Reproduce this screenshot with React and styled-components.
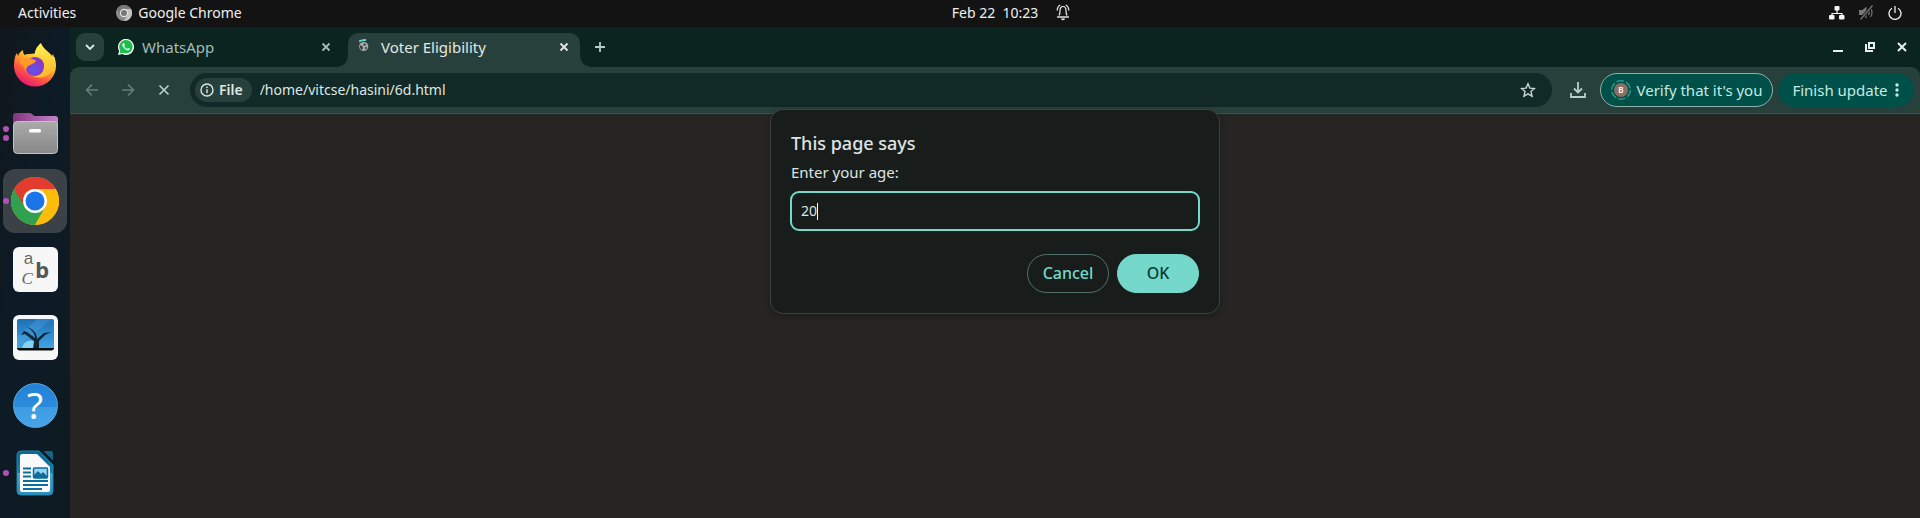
import React from "react";
import styled, { createGlobalStyle, css } from "styled-components";

const GlobalStyle = createGlobalStyle`
  *, *::before, *::after { box-sizing: border-box; }
  html, body { margin: 0; background: #272524; }
  body, button, input { font-family: "Noto Sans", "Open Sans", sans-serif; }
  button { border: 0; padding: 0; background: none; color: inherit; cursor: pointer; }
  svg { display: block; flex: none; }
`;

const Desktop = styled.div`
  display: flex;
  flex-direction: column;
  min-height: 100vh;
  overflow: hidden;
`;

const SystemBar = styled.header`
  display: grid;
  grid-template-columns: 1fr auto 1fr;
  align-items: center;
  height: 27px;
  padding: 0 18px 2px;
  background: #131313;
  color: #f0f0f0;
`;

const SystemGroup = styled.div`
  display: flex;
  align-items: center;
  gap: ${(p) => p.$gap}px;
  justify-content: ${(p) => (p.$end ? "flex-end" : "flex-start")};
`;

const ClockGroup = styled(SystemGroup)`
  padding-left: 102px;
`;

const SystemButton = styled.button`
  display: flex;
  align-items: center;
  gap: 6px;
  font-size: 14px;
  line-height: 20px;
  white-space: pre;
`;

const Workspace = styled.div`
  display: flex;
  flex: 1;
`;

const Dock = styled.nav`
  display: flex;
  flex-direction: column;
  align-items: center;
  gap: 4px;
  flex: none;
  width: 70px;
  padding: 6px 3px;
  background: linear-gradient(100deg, #10171c, #0d1b26 45%, #0d1a20);
`;

const DockItem = styled.button`
  position: relative;
  display: flex;
  align-items: center;
  justify-content: center;
  width: 64px;
  height: 64px;
  border-radius: 12px;
  background: ${(p) => (p.$active ? "#3a4147" : "transparent")};
`;

const RunningDots = styled.span`
  position: absolute;
  left: 0;
  top: 0;
  bottom: 0;
  display: flex;
  flex-direction: column;
  justify-content: center;
  gap: 3px;
`;

const Dot = styled.span`
  width: 6px;
  height: 6px;
  border-radius: 50%;
  background: #b350b5;
`;

const Browser = styled.main`
  display: flex;
  flex-direction: column;
  flex: 1;
  min-width: 0;
  background: #0b2420;
  position: relative;
`;

const TabStrip = styled.div`
  display: flex;
  align-items: flex-start;
  height: 40px;
  padding: 6px 0 0 6px;
`;

const TabSearch = styled.button`
  display: flex;
  align-items: center;
  justify-content: center;
  width: 28px;
  height: 28px;
  border-radius: 9px;
  background: #28403b;
  color: #dbe9e5;
`;

const foot = css`
  content: "";
  position: absolute;
  bottom: 0;
  width: 10px;
  height: 10px;
`;

const Tab = styled.div`
  position: relative;
  display: flex;
  align-items: center;
  width: ${(p) => (p.$active ? 232 : 244)}px;
  height: 34px;
  padding: ${(p) => (p.$active ? "0 6px 6px 9px" : "0 12px 6px 14px")};
  border-radius: 10px 10px 0 0;
  color: ${(p) => (p.$active ? "#e0e8e5" : "#a3bdb7")};
  ${(p) =>
    p.$active &&
    css`
      background: #28403b;
      &::before {
        ${foot}
        left: -10px;
        background: radial-gradient(circle at 0 0, transparent 9px, #28403b 10px);
      }
      &::after {
        ${foot}
        right: -10px;
        background: radial-gradient(circle at 100% 0, transparent 9px, #28403b 10px);
      }
    `}
`;

const TabTitle = styled.span`
  flex: 1;
  padding-left: 8px;
  font-size: 15px;
  line-height: 20px;
`;

const IconButton = styled.button`
  display: flex;
  align-items: center;
  justify-content: center;
  width: ${(p) => p.$size || 20}px;
  height: ${(p) => p.$size || 20}px;
  color: ${(p) => p.$color || "inherit"};
`;

const NewTab = styled(IconButton)`
  margin-left: 6px;
  color: #b4ccc6;
`;

const DownloadButton = styled(IconButton)`
  margin-left: 12px;
  color: #b9d0ca;
`;

const WindowControls = styled.div`
  display: flex;
  gap: 4px;
  margin-left: auto;
  padding-right: 4px;
  color: #e6f0ed;
`;

const Toolbar = styled.div`
  display: flex;
  align-items: center;
  height: 47px;
  padding: 0 6px 1px 8px;
  border-radius: 9px 9px 0 0;
  border-bottom: 1px solid #474e4b;
  background: #28403b;
`;

const NavButtons = styled.div`
  display: flex;
  gap: 8px;
  margin-right: 12px;
`;

const Omnibox = styled.div`
  display: flex;
  align-items: center;
  flex: 1;
  height: 34px;
  padding: 0 10px 0 5px;
  border-radius: 17px;
  background: #112a27;
  color: #dfe7e4;
`;

const FileChip = styled.button`
  display: flex;
  align-items: center;
  gap: 5px;
  height: 24px;
  padding: 0 9px 0 5px;
  border-radius: 12px;
  background: #28403b;
  font-size: 14px;
  font-weight: 600;
`;

const Address = styled.input`
  flex: 1;
  min-width: 0;
  padding: 0 8px;
  border: 0;
  outline: 0;
  background: none;
  color: inherit;
  font-size: 14px;
  line-height: 20px;
`;

const Pill = styled.button`
  display: flex;
  align-items: center;
  justify-content: center;
  gap: 6px;
  width: ${(p) => p.$width}px;
  height: 34px;
  margin-left: ${(p) => p.$gap}px;
  border: 1px solid ${(p) => (p.$outlined ? "#8fb3ab" : "#00504a")};
  border-radius: 17px;
  background: #00504a;
  color: #c5eae1;
  font-size: 15px;
  white-space: nowrap;
`;

const Page = styled.section`
  flex: 1;
  background: #272524;
`;

const Dialog = styled.form`
  position: absolute;
  top: 82px;
  left: 50%;
  transform: translateX(-50%);
  width: 450px;
  padding: 20px;
  border: 1px solid #3a4341;
  border-radius: 13px;
  background: #181d1c;
  box-shadow: 0 2px 6px rgba(0, 0, 0, 0.3);
  color: #dfe4e2;
`;

const DialogTitle = styled.h1`
  margin: 0;
  font-size: 18px;
  font-weight: 500;
  line-height: 26px;
`;

const DialogLabel = styled.label`
  display: block;
  margin: 5px 0 6px;
  font-size: 15px;
  line-height: 22px;
  padding-bottom: 2px;
`;

const Field = styled.label`
  display: flex;
  align-items: center;
  height: 40px;
  margin: 0 -1px;
  padding: 0 9px;
  border: 2px solid #74d9ca;
  border-radius: 9px;
  cursor: text;
`;

const FieldInput = styled.input`
  field-sizing: content;
  padding: 0;
  border: 0;
  outline: 0;
  background: none;
  color: inherit;
  caret-color: transparent;
  font-size: 14px;
  line-height: 20px;
`;

const Caret = styled.span`
  width: 1px;
  height: 17px;
  background: #fff;
`;

const Actions = styled.div`
  display: flex;
  justify-content: flex-end;
  gap: 8px;
  padding: 23px 0 0;
`;

const ActionButton = styled.button`
  width: 82px;
  height: 39px;
  padding-bottom: 2px;
  border: 1px solid ${(p) => (p.$primary ? "#74d9ca" : "#54716b")};
  border-radius: 20px;
  background: ${(p) => (p.$primary ? "#74d9ca" : "transparent")};
  color: ${(p) => (p.$primary ? "#0b3a36" : "#74d9ca")};
  font-size: 16px;
  font-weight: 500;
`;

function Stroke({ size = 16, width = 2, children }) {
  return (
    <svg width={size} height={size} viewBox={`0 0 ${size} ${size}`} fill="none" stroke="currentColor" strokeWidth={width} aria-hidden="true">
      {children}
    </svg>
  );
}

const CloseIcon = () => <Stroke size={10} width={1.8}><path d="M1.500 1.500l7 7M8.500 1.500l-7 7" /></Stroke>;

const ChromeGreyIcon = () => (
  <svg width="16" height="16" viewBox="0 0 16 16" aria-hidden="true">
    <circle cx="8" cy="8" r="8" fill="#8b8b8b" />
    <path d="M8 4h7a8 8 0 0 1-7 12l3.500-6z" fill="#c4c4c4" />
    <path d="M1 4a8 8 0 0 1 14 0H8L4.500 10z" fill="#777" />
    <circle cx="8" cy="8" r="4.200" fill="#e4e4e4" />
    <circle cx="8" cy="8" r="3" fill="#777" />
  </svg>
);

const BellIcon = () => (
  <svg width="14" height="17" viewBox="0 0 14 17" fill="none" stroke="#eee" strokeWidth="1.200" aria-hidden="true">
    <path d="M3 11.500C4 10 4 8.500 4 6.500 4 4 5.200 2.500 7 2.500S10 4 10 6.500c0 2 0 3.500 1 5" />
    <path d="M1 13h12" strokeWidth="1.400" />
    <path d="M1.200 6.500C1.200 4 2.400 2 4.300 1M12.800 6.500C12.800 4 11.600 2 9.700 1" />
    <path d="M5 14.500h4a2 1.800 0 0 1-4 0z" fill="#eee" stroke="none" />
  </svg>
);

const NetworkIcon = () => (
  <svg width="16" height="14" viewBox="0 0 16 14" aria-hidden="true">
    <path d="M8 4v3M3 10V7.500h10V10" fill="none" stroke="#f5f5f5" strokeWidth="1.200" />
    <rect x="5.500" width="5" height="4.500" rx="1" fill="#f5f5f5" />
    <rect x="0" y="9" width="5.500" height="4.500" rx="1" fill="#f5f5f5" />
    <rect x="10" y="9" width="5.500" height="4.500" rx="1" fill="#f5f5f5" />
  </svg>
);

const MutedIcon = () => (
  <svg width="15" height="15" viewBox="0 0 15 15" fill="none" stroke="#777" strokeWidth="1.200" aria-hidden="true">
    <path d="M0 5h3.500L7.500 1.500v12L3.500 10H0z" fill="#777" stroke="none" />
    <path d="M9.500 5c1 1.500 1 3.500 0 5M11.500 3c2 2.500 2 6.500 0 9" />
    <path d="M13.500.5l-12 14" stroke="#131313" strokeWidth="3" />
    <path d="M13.500.5l-12 14" />
  </svg>
);

const PowerIcon = () => <Stroke size={14} width={1.3}><path d="M4 2.200a6 6 0 1 0 6 0M7 0v7" /></Stroke>;

const FirefoxIcon = () => (
  <svg width="44" height="44" viewBox="0 0 44 44" aria-hidden="true">
    <defs>
      <linearGradient id="fxBody" x1=".85" y1=".1" x2=".3" y2="1">
        <stop offset="0" stopColor="#fff44f" /><stop offset=".35" stopColor="#ffb02e" /><stop offset=".65" stopColor="#ff5a3c" /><stop offset="1" stopColor="#e5127b" />
      </linearGradient>
      <radialGradient id="fxGlobe" cx=".45" cy=".65"><stop offset="0" stopColor="#5a55ee" /><stop offset="1" stopColor="#8b38c8" /></radialGradient>
      <linearGradient id="fxTail" x1=".4" y1="0" x2=".6" y2="1"><stop offset="0" stopColor="#fff34d" /><stop offset="1" stopColor="#ffb42c" /></linearGradient>
    </defs>
    <path d="M1 23C1 17 2 12 4 10l1 3c1-3 3-5 5-6 0 2 .5 4 1.500 5 1-1 3-1 5-1 4-1 9-1 13 2l12 1c1 4 1.500 6 1.500 9a21 20.500 0 0 1-42 0z" fill="url(#fxBody)" />
    <circle cx="22" cy="23.500" r="9.500" fill="url(#fxGlobe)" />
    <path d="M28 0c-5 4-7 9-6 13l6 2c3 3 4 8 2 13-2 4-6 6-11 5 7 3 15 2 20-5 3-4 3-9 2-14l-1-3-1 2c-2-3-4-4-6-6s-4-4-5-7z" fill="url(#fxTail)" />
    <path d="M7 17c4-2 9-3 12-1 2 1 4 1 4 2-1 2-3 2.500-5 3.500-3 1-5 3-5 7-2-3-2-7-6-8z" fill="#ff9a24" />
  </svg>
);

const FilesIcon = () => (
  <svg width="45" height="42" viewBox="0 0 45 42" aria-hidden="true">
    <defs>
      <linearGradient id="folderBack"><stop stopColor="#84337f" /><stop offset="1" stopColor="#c885cc" /></linearGradient>
      <linearGradient id="folderFront" x2="0" y2="1"><stop stopColor="#aaa" /><stop offset="1" stopColor="#888" /></linearGradient>
    </defs>
    <path d="M0 4a3 3 0 0 1 3-3h14c2 0 3 3 5 3h20a3 3 0 0 1 3 3v14H0z" fill="url(#folderBack)" />
    <rect x=".5" y="9.500" width="44" height="32" rx="4" fill="url(#folderFront)" stroke="#c4c4c4" />
    <rect x="16" y="17" width="12" height="3.500" rx="1.500" fill="#fff" />
  </svg>
);

const ChromeIcon = () => (
  <svg width="48" height="48" viewBox="0 0 48 48" aria-hidden="true">
    <circle cx="24" cy="24" r="24" fill="#fbbc0b" />
    <path d="M3.200 12A24 24 0 0 0 24 48L34.400 30 24 24z" fill="#2fa14f" />
    <path d="M3.200 12A24 24 0 0 1 44.800 12H24a12 12 0 0 0-10.400 18z" fill="#e33b2e" />
    <path d="M24 48a24 24 0 0 0 20.800-36H24l10.400 18z" fill="#fbbc0b" />
    <circle cx="24" cy="24" r="12" fill="#fff" />
    <circle cx="24" cy="24" r="9.500" fill="#1b74e8" />
  </svg>
);

const FontTile = styled.span`
  display: flex;
  align-items: center;
  justify-content: center;
  gap: 2px;
  width: 45px;
  height: 45px;
  border-radius: 6px;
  background: #f7f7f7;
  color: #666;
`;

const LetterStack = styled.span`
  display: flex;
  flex-direction: column;
  font-size: 17px;
  line-height: 20px;

  i { font-family: "Liberation Serif", serif; }
  span { padding-left: 3px; font-family: "Liberation Sans", sans-serif; }
`;

const BoldLetter = styled.b`
  color: #555;
  font-size: 22px;
  line-height: 30px;
`;

const ImageIcon = () => (
  <svg width="45" height="45" viewBox="0 0 45 45" aria-hidden="true">
    <defs><linearGradient id="sky" x2="0" y2="1"><stop stopColor="#1e6fb5" /><stop offset="1" stopColor="#43a7e4" /></linearGradient></defs>
    <rect width="45" height="45" rx="6" fill="#f7f7f7" />
    <rect x="4" y="4" width="37" height="31" rx="2" fill="url(#sky)" />
    <path d="M4 22L24 4h15L4 32z" fill="#55afe7" opacity=".3" />
    <path d="M9 34a8.500 8.500 0 0 1 17 0z" fill="#85d0f5" />
    <path d="M20 34l1-8c-3-2-6-5-9-7l-4 1 3-4 3 1 8 6c0-4-2-7-8-11 6 2 10 6 10 12l7-6 7-1-6 3-6 6 0 8z" fill="#102536" />
    <path d="M4 33h37v1l-2 1.500H6L4 34z" fill="#080c10" />
  </svg>
);

const HelpTile = styled.span`
  display: flex;
  align-items: center;
  justify-content: center;
  width: 45px;
  height: 45px;
  border: 1px solid #54a9e6;
  border-radius: 50%;
  background: linear-gradient(#2482d6, #2b8bdb 53%, #3e9ce3 54%, #46a3e6);
  color: #fff;
  font-size: 37px;
  line-height: 44px;
`;

const WriterIcon = () => (
  <svg width="38" height="46" viewBox="0 0 38 46" aria-hidden="true">
    <defs><linearGradient id="writer" x2="0" y2="1"><stop stopColor="#0d6590" /><stop offset=".49" stopColor="#1a7dac" /><stop offset=".5" stopColor="#4aa3c8" /><stop offset="1" stopColor="#2d8fbd" /></linearGradient></defs>
    <path d="M5 1h18l14 14v26a4 4 0 0 1-4 4H5a4 4 0 0 1-4-4V5a4 4 0 0 1 4-4z" fill="url(#writer)" stroke="#1f83ae" />
    <path d="M6 4h15l13 13v23a2 2 0 0 1-2 2H6a2 2 0 0 1-2-2V6a2 2 0 0 1 2-2z" fill="#fafafa" />
    <path d="M27.500 1H35a2 2 0 0 1 2 2v7.500z" fill="#14638a" />
    <path d="M7 18.500h8M7 22.500h8M7 26.500h8M7 31h25M7 35h25M7 39h19" stroke="#0b6e9d" strokeWidth="2" />
    <rect x="17.500" y="18" width="14" height="10" rx="1" fill="#9bd4ee" stroke="#0b6e9d" strokeWidth="1.500" />
    <path d="M18 28v-3l4-4 3 3 2-2 4 4v2z" fill="#0b6e9d" />
  </svg>
);

const WhatsAppIcon = () => (
  <svg width="16" height="16" viewBox="0 0 16 16" aria-hidden="true">
    <path d="M0 16l1.100-4A8 8 0 1 1 4.200 15z" fill="#fff" />
    <path d="M1.500 14.500l.8-3A6.700 6.700 0 1 1 4.700 13.700z" fill="#18bd4b" />
    <path d="M5 4.200c-1 .8-1 2 0 3.500 1.300 2 3 3.300 4.700 3.700 1 .2 2-.6 2-1.600L10 8.900l-.9 1C7.700 9.300 6.800 8.400 6.200 7l.7-.8-.7-1.900z" fill="#fff" />
  </svg>
);

const LoadingIcon = () => (
  <svg width="16" height="16" viewBox="0 0 16 16" aria-hidden="true">
    <path d="M2 2.500Q5 .8 9 1" fill="none" stroke="#69d5c5" strokeWidth="1.800" />
    <circle cx="6.700" cy="7.500" r="4.600" fill="#a6aaad" />
    <path d="M3 6.500h1.500L6 8l-.5 2.500-1 .2C3 9.500 2.700 8 3 6.500zM6.500 4.500l2 .2L9 6 7.500 7l-1-1zM8 8.500l2-.7-.5 2L8 10.500z" fill="#34443f" />
  </svg>
);

const AvatarIcon = () => (
  <svg width="20" height="20" viewBox="0 0 20 20" aria-hidden="true">
    <circle cx="10" cy="10" r="9.200" fill="none" stroke="#2b9789" strokeWidth="1.400" strokeDasharray="7.500 2.130" />
    <circle cx="10" cy="10" r="7" fill="#8d6e63" />
    <text x="10" y="13" textAnchor="middle" fill="#fff" fontSize="8" fontWeight="600">B</text>
  </svg>
);

const dockItems = [
  { name: "Firefox", icon: <FirefoxIcon />, dots: 0 },
  { name: "Files", icon: <FilesIcon />, dots: 2 },
  { name: "Google Chrome", icon: <ChromeIcon />, dots: 1, active: true },
  { name: "Fonts", icon: <FontTile><LetterStack><span>a</span><i>C</i></LetterStack><BoldLetter>b</BoldLetter></FontTile>, dots: 0 },
  { name: "Image Viewer", icon: <ImageIcon />, dots: 0 },
  { name: "Help", icon: <HelpTile>?</HelpTile>, dots: 0 },
  { name: "LibreOffice Writer", icon: <WriterIcon />, dots: 1 },
];

export default function App() {
  return (
    <Desktop>
      <GlobalStyle />
      <SystemBar>
        <SystemGroup $gap={40}>
          <SystemButton>Activities</SystemButton>
          <SystemButton><ChromeGreyIcon />Google Chrome</SystemButton>
        </SystemGroup>
        <ClockGroup $gap={18}>
          <SystemButton>{"Feb 22  10:23"}</SystemButton>
          <BellIcon />
        </ClockGroup>
        <SystemGroup $gap={14} $end>
          <NetworkIcon />
          <MutedIcon />
          <PowerIcon />
        </SystemGroup>
      </SystemBar>

      <Workspace>
        <Dock aria-label="Dock">
          {dockItems.map((item) => (
            <DockItem key={item.name} aria-label={item.name} $active={item.active}>
              <RunningDots>
                {Array.from({ length: item.dots }, (_, i) => <Dot key={i} />)}
              </RunningDots>
              {item.icon}
            </DockItem>
          ))}
        </Dock>

        <Browser>
          <TabStrip>
            <TabSearch aria-label="Search tabs">
              <Stroke size={12} width={1.8}><path d="M2 4l4 4 4-4" /></Stroke>
            </TabSearch>
            <Tab>
              <WhatsAppIcon />
              <TabTitle>WhatsApp</TabTitle>
              <IconButton aria-label="Close WhatsApp"><CloseIcon /></IconButton>
            </Tab>
            <Tab $active>
              <LoadingIcon />
              <TabTitle>Voter Eligibility</TabTitle>
              <IconButton aria-label="Close Voter Eligibility"><CloseIcon /></IconButton>
            </Tab>
            <NewTab $size={28} aria-label="New tab">
              <Stroke size={12} width={1.8}><path d="M6 1v10M1 6h10" /></Stroke>
            </NewTab>
            <WindowControls>
              <IconButton $size={28} aria-label="Minimize"><Stroke size={10}><path d="M0 9h10" /></Stroke></IconButton>
              <IconButton $size={28} aria-label="Restore"><Stroke size={10}><path d="M4 1h5v5H4zM1 2v7h7" /></Stroke></IconButton>
              <IconButton $size={28} aria-label="Close"><Stroke size={10}><path d="M1 1l8 8M9 1l-8 8" /></Stroke></IconButton>
            </WindowControls>
          </TabStrip>

          <Toolbar>
            <NavButtons>
              <IconButton $size={28} $color="#65807a" aria-label="Back"><Stroke size={14} width={1.6}><path d="M13 7H2M7 1.500L1.500 7 7 12.500" /></Stroke></IconButton>
              <IconButton $size={28} $color="#65807a" aria-label="Forward"><Stroke size={14} width={1.6}><path d="M1 7h11M7 1.500L12.500 7 7 12.500" /></Stroke></IconButton>
              <IconButton $size={28} $color="#bdd3cd" aria-label="Stop"><Stroke size={12} width={1.6}><path d="M1.500 1.500l9 9M10.500 1.500l-9 9" /></Stroke></IconButton>
            </NavButtons>
            <Omnibox>
              <FileChip>
                <Stroke size={14} width={1.4}><circle cx="7" cy="7" r="6" /><path d="M7 6.200v4M7 3.500v1.500" /></Stroke>
                File
              </FileChip>
              <Address aria-label="Address" defaultValue="/home/vitcse/hasini/6d.html" />
              <IconButton $size={28} $color="#c4d7d2" aria-label="Bookmark">
                <Stroke size={16} width={1.4}><path d="M8 1.800l1.900 4.300 4.600.4-3.500 3.100 1.100 4.600L8 11.800l-4.100 2.400L5 9.600 1.500 6.500l4.600-.4z" /></Stroke>
              </IconButton>
            </Omnibox>
            <DownloadButton $size={28} aria-label="Downloads">
              <Stroke size={16} width={1.8}><path d="M8 0v10M4 6.500l4 4 4-4M1 11v4h14v-4" /></Stroke>
            </DownloadButton>
            <Pill $width={173} $gap={8} $outlined><AvatarIcon />Verify that it's you</Pill>
            <Pill $width={136} $gap={5}>
              Finish update
              <svg width="6" height="16" viewBox="0 0 6 16" fill="currentColor" aria-hidden="true"><circle cx="3" cy="3" r="1.700" /><circle cx="3" cy="8" r="1.700" /><circle cx="3" cy="13" r="1.700" /></svg>
            </Pill>
          </Toolbar>
          <Page />

          <Dialog role="dialog" aria-labelledby="prompt-title" onSubmit={(e) => e.preventDefault()}>
            <DialogTitle id="prompt-title">This page says</DialogTitle>
            <DialogLabel htmlFor="age">Enter your age:</DialogLabel>
            <Field htmlFor="age"><FieldInput id="age" defaultValue="20" /><Caret /></Field>
            <Actions>
              <ActionButton type="button">Cancel</ActionButton>
              <ActionButton type="submit" $primary>OK</ActionButton>
            </Actions>
          </Dialog>
        </Browser>
      </Workspace>
    </Desktop>
  );
}
